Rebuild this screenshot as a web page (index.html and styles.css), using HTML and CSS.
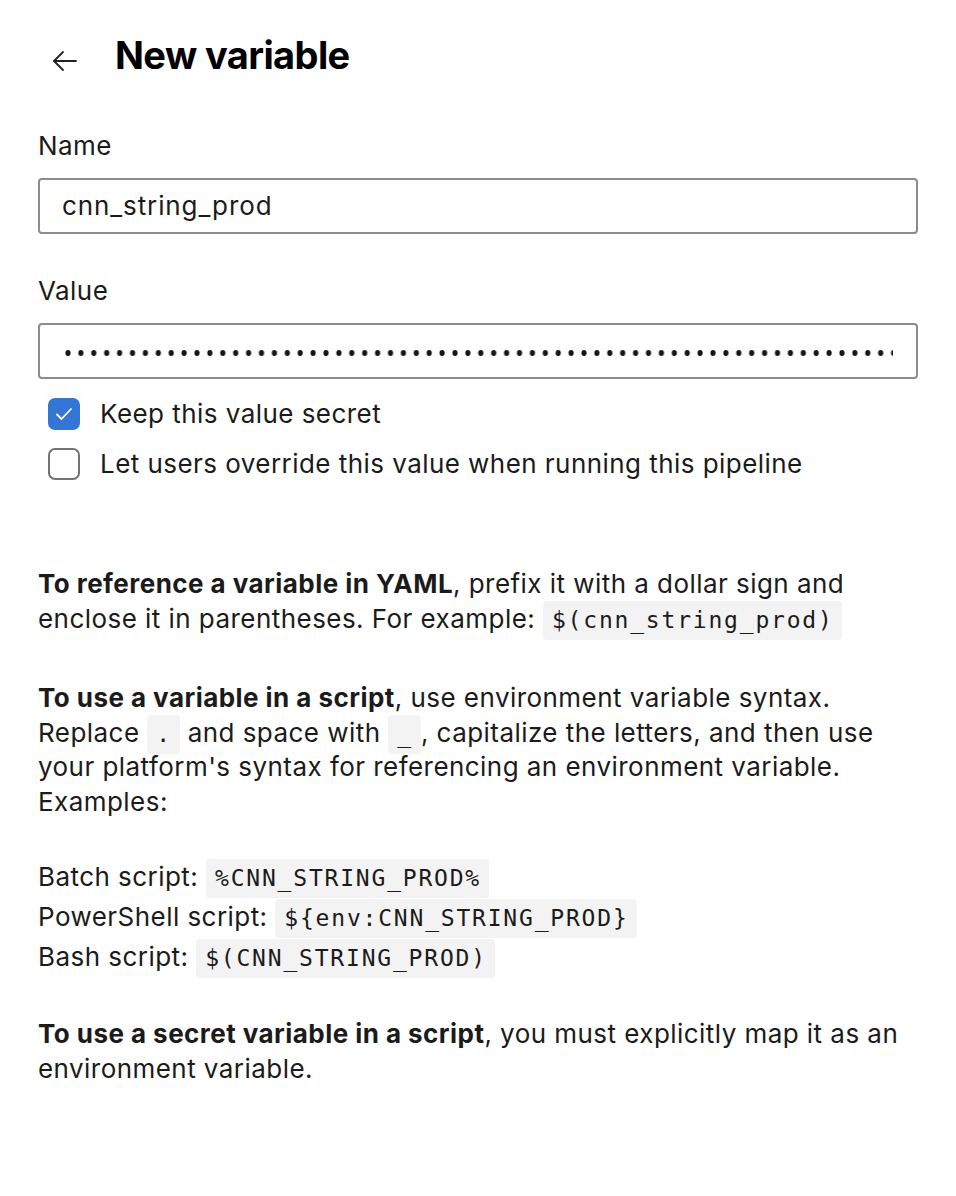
FILE: index.html
```
<!DOCTYPE html>
<html lang="en">
<head>
<meta charset="utf-8">
<title>New variable</title>
<link rel="stylesheet" href="styles.css">
</head>
<body>
<div class="page">
  <header class="header">
    <button class="back" aria-label="Back">
      <svg width="28" height="24" viewBox="0 0 28 24" fill="none" stroke="#222" stroke-width="1.8" stroke-linecap="round" stroke-linejoin="round">
        <path d="M25 12H3"/>
        <path d="M12 3L3 12L12 21"/>
      </svg>
    </button>
    <h1 class="title">New variable</h1>
  </header>

  <div class="field">
    <label class="label">Name</label>
    <div class="input"><span class="input-text">cnn_string_prod</span></div>
  </div>

  <div class="field field-value">
    <label class="label">Value</label>
    <div class="input input-secret">
      <svg class="dots" width="831" height="10" viewBox="0 0 831 10" role="img" aria-label="Hidden value">
        <defs>
          <pattern id="dotpat" x="0" y="0" width="12.9" height="10" patternUnits="userSpaceOnUse">
            <ellipse cx="6" cy="5" rx="2.6" ry="3" fill="#151515"/>
          </pattern>
        </defs>
        <rect x="0" y="0" width="831" height="10" fill="url(#dotpat)"/>
      </svg>
    </div>
  </div>

  <div class="checks">
    <div class="check-row">
      <span class="box box-checked">
        <svg width="18" height="14" viewBox="0 0 18 14" fill="none" stroke="#fff" stroke-width="1.8" stroke-linecap="round" stroke-linejoin="round"><path d="M2 7.5L6.5 12L16 2"/></svg>
      </span>
      <span class="check-label">Keep this value secret</span>
    </div>
    <div class="check-row">
      <span class="box"></span>
      <span class="check-label">Let users override this value when running this pipeline</span>
    </div>
  </div>

  <div class="help">
    <p class="para para-yaml"><strong>To reference a variable in YAML</strong>, prefix it with a dollar sign and enclose it in parentheses. For example: <code class="code">$(cnn_string_prod)</code></p>
    <p class="para para-script"><strong>To use a variable in a script</strong>, use environment variable syntax. Replace <code class="code">.</code> and space with <code class="code">_</code>, capitalize the letters, and then use your platform's syntax for referencing an environment variable. Examples:</p>
    <div class="examples">
      <div class="example">Batch script: <code class="code">%CNN_STRING_PROD%</code></div>
      <div class="example">PowerShell script: <code class="code">${env:CNN_STRING_PROD}</code></div>
      <div class="example">Bash script: <code class="code">$(CNN_STRING_PROD)</code></div>
    </div>
    <p class="para"><strong>To use a secret variable in a script</strong>, you must explicitly map it as an environment variable.</p>
  </div>
</div>
</body>
</html>
```

FILE: styles.css
```
* { box-sizing: border-box; }
html, body { margin: 0; padding: 0; background: #fff; }
body {
  font-family: Inter, "Noto Sans", "Liberation Sans", sans-serif;
  color: #1b1b1b;
  font-size: 26px;
  letter-spacing: 0.45px;
  line-height: 34px;
}
.page {
  padding: 31px 38px 0 38px;
}
.header {
  display: flex;
  align-items: center;
  height: 48px;
}
.back {
  border: 0;
  background: none;
  padding: 0;
  margin: 0 0 0 13px;
  width: 28px;
  height: 24px;
  display: flex;
  margin-top: 12px;
}
.title {
  margin: 0 0 0 36px;
  font-size: 38px;
  line-height: 48px;
  font-weight: 700;
  color: #000;
  letter-spacing: -0.6px;
}
.field {
  margin-top: 50px;
  display: flex;
  flex-direction: column;
}
.field-value { margin-top: 40px; }
.label {
  display: block;
  line-height: 34px;
  margin-bottom: 15px;
}
.input {
  height: 56px;
  border: 2px solid #8c8c8c;
  border-radius: 4px;
  display: flex;
  align-items: center;
  padding: 0 22px;
  overflow: hidden;
}
.input-text { white-space: nowrap; letter-spacing: 0.9px; }
.input-secret { padding: 0 0 0 22px; }
.dots {
  display: block;
  flex: none;
  margin-top: 4px;
}
.checks {
  margin-top: 18px;
  display: flex;
  flex-direction: column;
  gap: 16px;
}
.check-row {
  display: flex;
  align-items: center;
  height: 34px;
}
.box {
  width: 32px;
  height: 32px;
  border-radius: 7px;
  border: 2px solid #737373;
  margin-left: 10px;
  margin-right: 20px;
  display: flex;
  align-items: center;
  justify-content: center;
  flex: none;
}
.box-checked {
  background: #3476d6;
  border-color: #3476d6;
}
.help {
  margin-top: 86px;
  display: flex;
  flex-direction: column;
}
.para {
  margin: 0;
  line-height: 34.5px;
}
.para-yaml { margin-bottom: 45px; }
.para-script { margin-bottom: 38px; }
.code {
  font-family: "DejaVu Sans Mono", "Liberation Mono", monospace;
  font-size: 23px;
  line-height: 1;
  letter-spacing: 1.8px;
  background: #f3f3f3;
  border-radius: 4px;
  padding: 6px 8px 7px 9px;
}
.examples {
  margin-bottom: 40px;
}
.example {
  line-height: 40px;
}
```
